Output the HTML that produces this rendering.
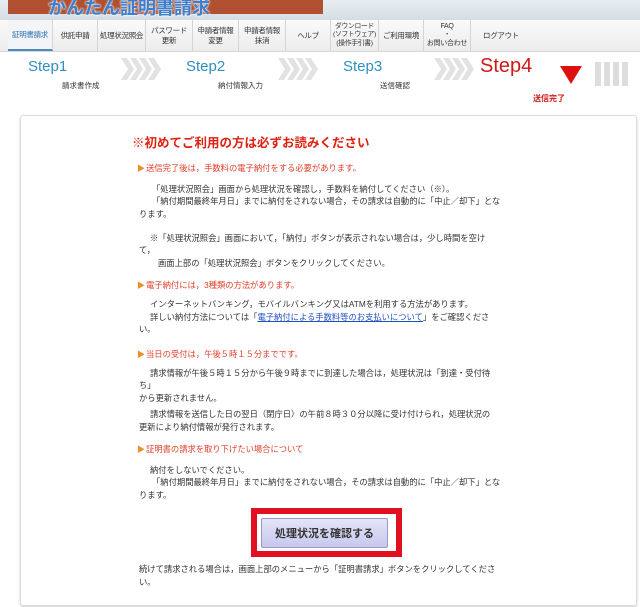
<!DOCTYPE html>
<html><head><meta charset="utf-8"><style>
body{margin:0;width:640px;height:607px;overflow:hidden;background:#fff;font-family:"Liberation Sans","Noto Sans CJK JP",sans-serif;position:relative}
.a{position:absolute;white-space:nowrap}
.t{font-size:8.3px;color:#333}
.o{font-size:8.3px;color:#e0402a}
.o:before{content:"▶";color:#e8902a;font-size:8px;margin-right:1px}
.nav{position:absolute;top:20px;left:0;width:640px;height:31px;background:linear-gradient(#fafafa,#ececec);border-bottom:1px solid #d8d8d8}
.tab{position:absolute;top:0;height:31px;display:flex;align-items:center;justify-content:center;text-align:center;font-size:7.5px;line-height:9.5px;color:#333;border-right:1px solid #d4d4d4;white-space:nowrap;letter-spacing:-0.3px}
.step{position:absolute;font-size:15px;color:#2f8fbf}
.sl{position:absolute;font-size:7.5px;color:#333}
</style></head><body>
<div class="a" style="left:0;top:0;width:640px;height:20px;background:linear-gradient(#e8eef2,#d5dde2)"></div>
<div class="a" style="left:8px;top:0;width:315px;height:14px;background:#b05030"></div>
<div class="a" style="left:48px;top:-6px;font-size:18px;font-weight:bold;color:#3a7fd0;text-shadow:0 0 2px #fff,0 0 2px #fff">かんたん証明書請求</div>
<div class="nav">
<div class="tab" style="left:8px;width:44px;color:#2a6fb0;background:#f2f4f6;border-bottom:2px solid #4a8ac0;height:29px">証明書請求</div>
<div class="tab" style="left:53px;width:44px">供託申請</div>
<div class="tab" style="left:98px;width:47px">処理状況照会</div>
<div class="tab" style="left:146px;width:46px">パスワード<br>更新</div>
<div class="tab" style="left:193px;width:45px">申請者情報<br>変更</div>
<div class="tab" style="left:239px;width:46px">申請者情報<br>抹消</div>
<div class="tab" style="left:286px;width:44px">ヘルプ</div>
<div class="tab" style="left:331px;width:47px;font-size:6.8px;line-height:8.5px">ダウンロード<br>(ソフトウェア)<br>(操作手引書)</div>
<div class="tab" style="left:379px;width:44px">ご利用環境</div>
<div class="tab" style="left:424px;width:46px;font-size:7px;line-height:8.5px">FAQ<br>・<br>お問い合わせ</div>
<div class="tab" style="left:471px;width:60px;border:none">ログアウト</div>
</div>
<svg class="a" style="left:0;top:0" width="640" height="110">
<defs><path id="c" d="M0 58 h6 l7 11 l-7 11 h-6 l7 -11z"/></defs>
<g fill="#e2e2e2">
<use href="#c" x="121"/><use href="#c" x="130"/><use href="#c" x="139"/><use href="#c" x="148"/>
<use href="#c" x="278"/><use href="#c" x="287"/><use href="#c" x="296"/><use href="#c" x="305"/>
<use href="#c" x="434"/><use href="#c" x="443"/><use href="#c" x="452"/><use href="#c" x="461"/>
</g>
</svg>
<div class="step" style="left:28px;top:58px">Step1</div>
<div class="sl" style="left:62px;top:80px">請求書作成</div>
<div class="step" style="left:186px;top:58px">Step2</div>
<div class="sl" style="left:218px;top:80px">納付情報入力</div>
<div class="step" style="left:343px;top:58px">Step3</div>
<div class="sl" style="left:380px;top:80px">送信確認</div>
<div class="step" style="left:480px;top:55px;font-size:20px;color:#d01818">Step4</div>
<div class="a" style="left:560px;top:66px;width:0;height:0;border-left:11px solid transparent;border-right:11px solid transparent;border-top:18px solid #e01010"></div>
<div class="a" style="left:533px;top:93px;font-size:8px;color:#d01818;font-weight:bold">送信完了</div>
<div class="a" style="left:595px;top:62px;width:36px;height:24px;background:repeating-linear-gradient(90deg,#ddd 0 6px,#fff 6px 9px)"></div>

<div class="a" style="left:20px;top:115px;width:615px;height:489px;border:1px solid #ddd;border-radius:3px;box-shadow:0 1px 2px #ccc"></div>
<div class="a" style="left:132px;top:132px;font-size:12.5px;font-weight:bold;color:#e02010">※初めてご利用の方は必ずお読みください</div>
<div class="a o" style="left:137px;top:162px">送信完了後は，手数料の電子納付をする必要があります。</div>
<div class="a t" style="left:152px;top:183px">「処理状況照会」画面から処理状況を確認し，手数料を納付してください（※）。</div>
<div class="a t" style="left:152px;top:195px">「納付期間最終年月日」までに納付をされない場合，その請求は自動的に「中止／却下」とな</div>
<div class="a t" style="left:139px;top:208px">ります。</div>
<div class="a t" style="left:150px;top:232px">※「処理状況照会」画面において，「納付」ボタンが表示されない場合は，少し時間を空け</div>
<div class="a t" style="left:139px;top:244px">て，</div>
<div class="a t" style="left:158px;top:257px">画面上部の「処理状況照会」ボタンをクリックしてください。</div>
<div class="a o" style="left:137px;top:279px">電子納付には，3種類の方法があります。</div>
<div class="a t" style="left:150px;top:298px">インターネットバンキング，モバイルバンキング又はATMを利用する方法があります。</div>
<div class="a t" style="left:150px;top:311px">詳しい納付方法については「<span style="color:#2050c0;text-decoration:underline">電子納付による手数料等のお支払いについて</span>」をご確認くださ</div>
<div class="a t" style="left:139px;top:323px">い。</div>
<div class="a o" style="left:137px;top:348px">当日の受付は，午後５時１５分までです。</div>
<div class="a t" style="left:150px;top:367px">請求情報が午後５時１５分から午後９時までに到達した場合は，処理状況は「到達・受付待</div>
<div class="a t" style="left:139px;top:379px">ち」</div>
<div class="a t" style="left:139px;top:392px">から更新されません。</div>
<div class="a t" style="left:150px;top:408px">請求情報を送信した日の翌日（閉庁日）の午前８時３０分以降に受け付けられ，処理状況の</div>
<div class="a t" style="left:139px;top:421px">更新により納付情報が発行されます。</div>
<div class="a o" style="left:137px;top:443px">証明書の請求を取り下げたい場合について</div>
<div class="a t" style="left:150px;top:464px">納付をしないでください。</div>
<div class="a t" style="left:152px;top:476px">「納付期間最終年月日」までに納付をされない場合，その請求は自動的に「中止／却下」とな</div>
<div class="a t" style="left:139px;top:489px">ります。</div>
<div class="a" style="left:251px;top:508px;width:151px;height:49px;background:#e01020"></div>
<div class="a" style="left:257px;top:514px;width:139px;height:37px;background:#fff"></div>
<div class="a" style="left:261px;top:518px;width:125px;height:28px;background:linear-gradient(#e4e4f8,#c8c8ee);border:1px solid #9a9ac8;border-radius:2px;font-size:11px;font-weight:bold;color:#333;display:flex;align-items:center;justify-content:center">処理状況を確認する</div>
<div class="a t" style="left:139px;top:563px">続けて請求される場合は，画面上部のメニューから「証明書請求」ボタンをクリックしてくださ</div>
<div class="a t" style="left:139px;top:576px">い。</div>
</body></html>
